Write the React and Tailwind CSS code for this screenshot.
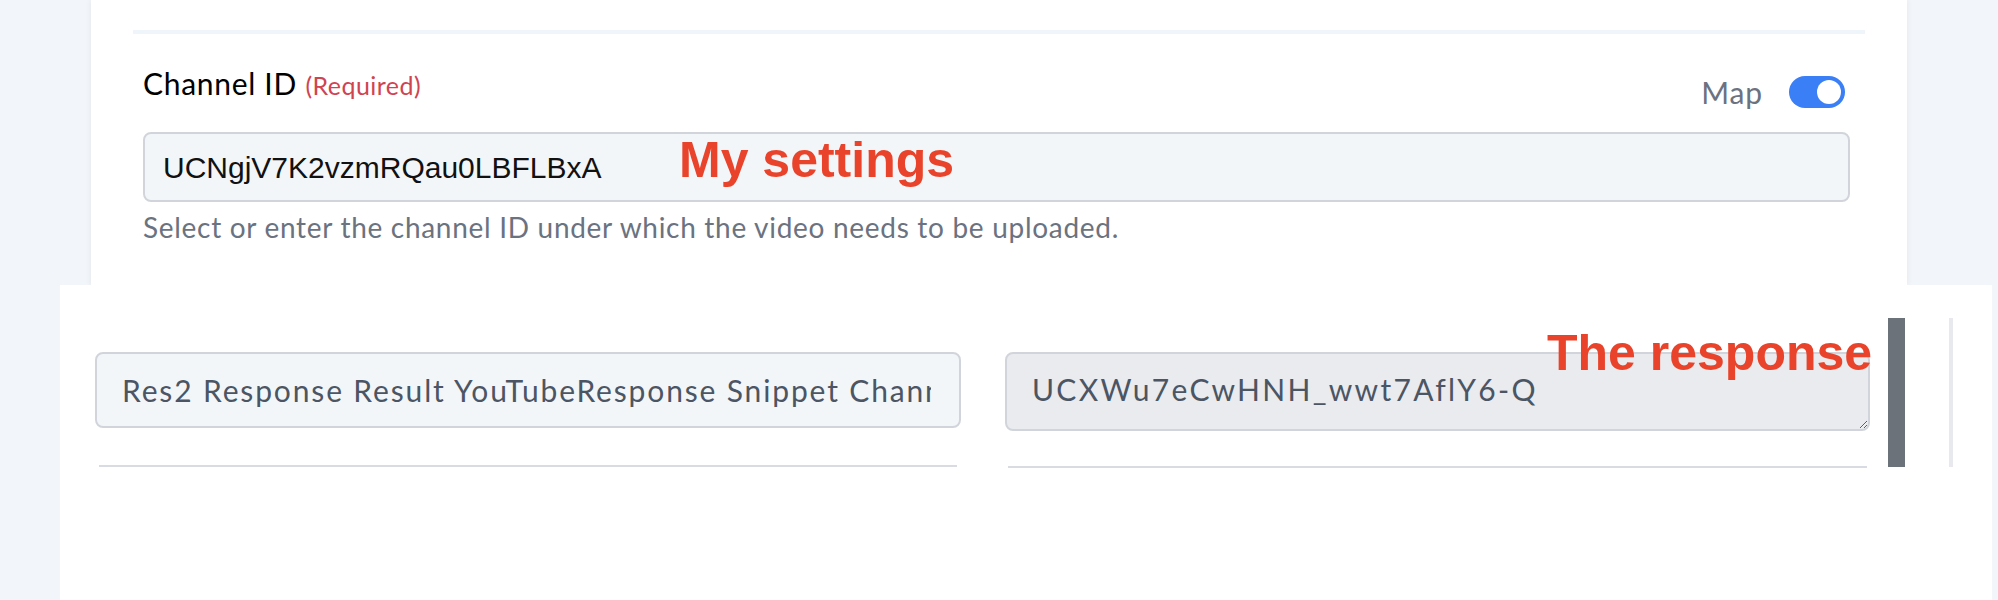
import React from "react";

export default function App() {
  const lato = { fontFamily: "Lato, 'Open Sans', sans-serif" };
  return (
    <div className="relative w-[1998px] h-[600px] overflow-hidden bg-[#f2f5f9] flex flex-col" style={lato}>
      {/* Top card */}
      <div className="ml-[91px] w-[1816px] h-[285px] shrink-0 bg-white shadow-[0_0_6px_rgba(0,0,0,0.07)] px-[42px]">
        <div className="mt-[30px] h-[4px] bg-[#f0f5fb]" />
        <div className="pl-[10px] pr-[15px]">
          <div className="mt-[31px] flex items-start justify-between">
            <div className="text-[30px] leading-[36px] tracking-[0.7px] text-black">
              Channel ID <span className="text-[25px] tracking-[0.45px] text-[#d0444f]">(Required)</span>
            </div>
            <div className="mt-[11px] flex items-center gap-[26px] mr-[5px]">
              <span className="text-[30px] leading-[32px] tracking-[0.9px] text-[#6b7280]">Map</span>
              <div className="w-[56px] h-[32px] rounded-full bg-[#3b7ff6] flex items-center justify-end pr-[4px]">
                <div className="w-[24px] h-[24px] rounded-full bg-white" />
              </div>
            </div>
          </div>
          <div className="mt-[24px] h-[70px] rounded-[8px] border-2 border-[#d1d5db] bg-[#f3f6f9] flex items-center pl-[18px]">
            <span className="text-[30px] text-[#111] font-['Liberation_Sans',Arial,sans-serif]">UCNgjV7K2vzmRQau0LBFLBxA</span>
          </div>
          <div className="mt-[7px] text-[28px] leading-[36px] tracking-[0.7px] text-[#6b7280]">
            Select or enter the channel ID under which the video needs to be uploaded.
          </div>
        </div>
      </div>

      {/* Bottom panel */}
      <div className="ml-[60px] w-[1932px] flex-1 bg-white pt-[33px] pl-[35px] flex items-start">
        <div className="w-[866px] shrink-0">
          <div className="mt-[34px] h-[76px] rounded-[8px] border-2 border-[#d1d5db] bg-[#f3f6f9] flex items-center pl-[25px] pr-[28px]">
            <div className="overflow-hidden whitespace-nowrap text-[30px] leading-[36px] tracking-[1.85px] text-[#4b5563]">
              Res2 Response Result YouTubeResponse Snippet ChannelId
            </div>
          </div>
          <div className="mt-[37px] mx-[4px] h-[2px] bg-[#d8dce2]" />
        </div>
        <div className="ml-[44px] w-[865px] shrink-0">
          <textarea
            readOnly
            value="UCXWu7eCwHNH_wwt7AflY6-Q"
            className="mt-[34px] block w-full h-[79px] rounded-[8px] border-2 border-[#d1d5db] bg-[#e9ebef] pl-[25px] pt-[17px] text-[30px] leading-[36px] tracking-[2.3px] text-[#4b5563] outline-none"
            style={lato}
          />
          <div className="mt-[35px] mx-[3px] h-[2px] bg-[#d8dce2]" />
        </div>
        <div className="ml-[18px] w-[17px] h-[149px] shrink-0 bg-[#6c727a]" />
        <div className="ml-[44px] w-[4px] h-[149px] shrink-0 bg-[#e7e9ee]" />
      </div>

      {/* Annotations */}
      <div className="absolute left-[679px] top-[135px] text-[50px] leading-[50px] font-bold text-[#e9442b] whitespace-nowrap font-['Liberation_Sans',Arial,sans-serif]">
        My settings
      </div>
      <div className="absolute left-[1547px] top-[328px] text-[50px] leading-[50px] font-bold text-[#e9442b] whitespace-nowrap font-['Liberation_Sans',Arial,sans-serif]">
        The response
      </div>
    </div>
  );
}
